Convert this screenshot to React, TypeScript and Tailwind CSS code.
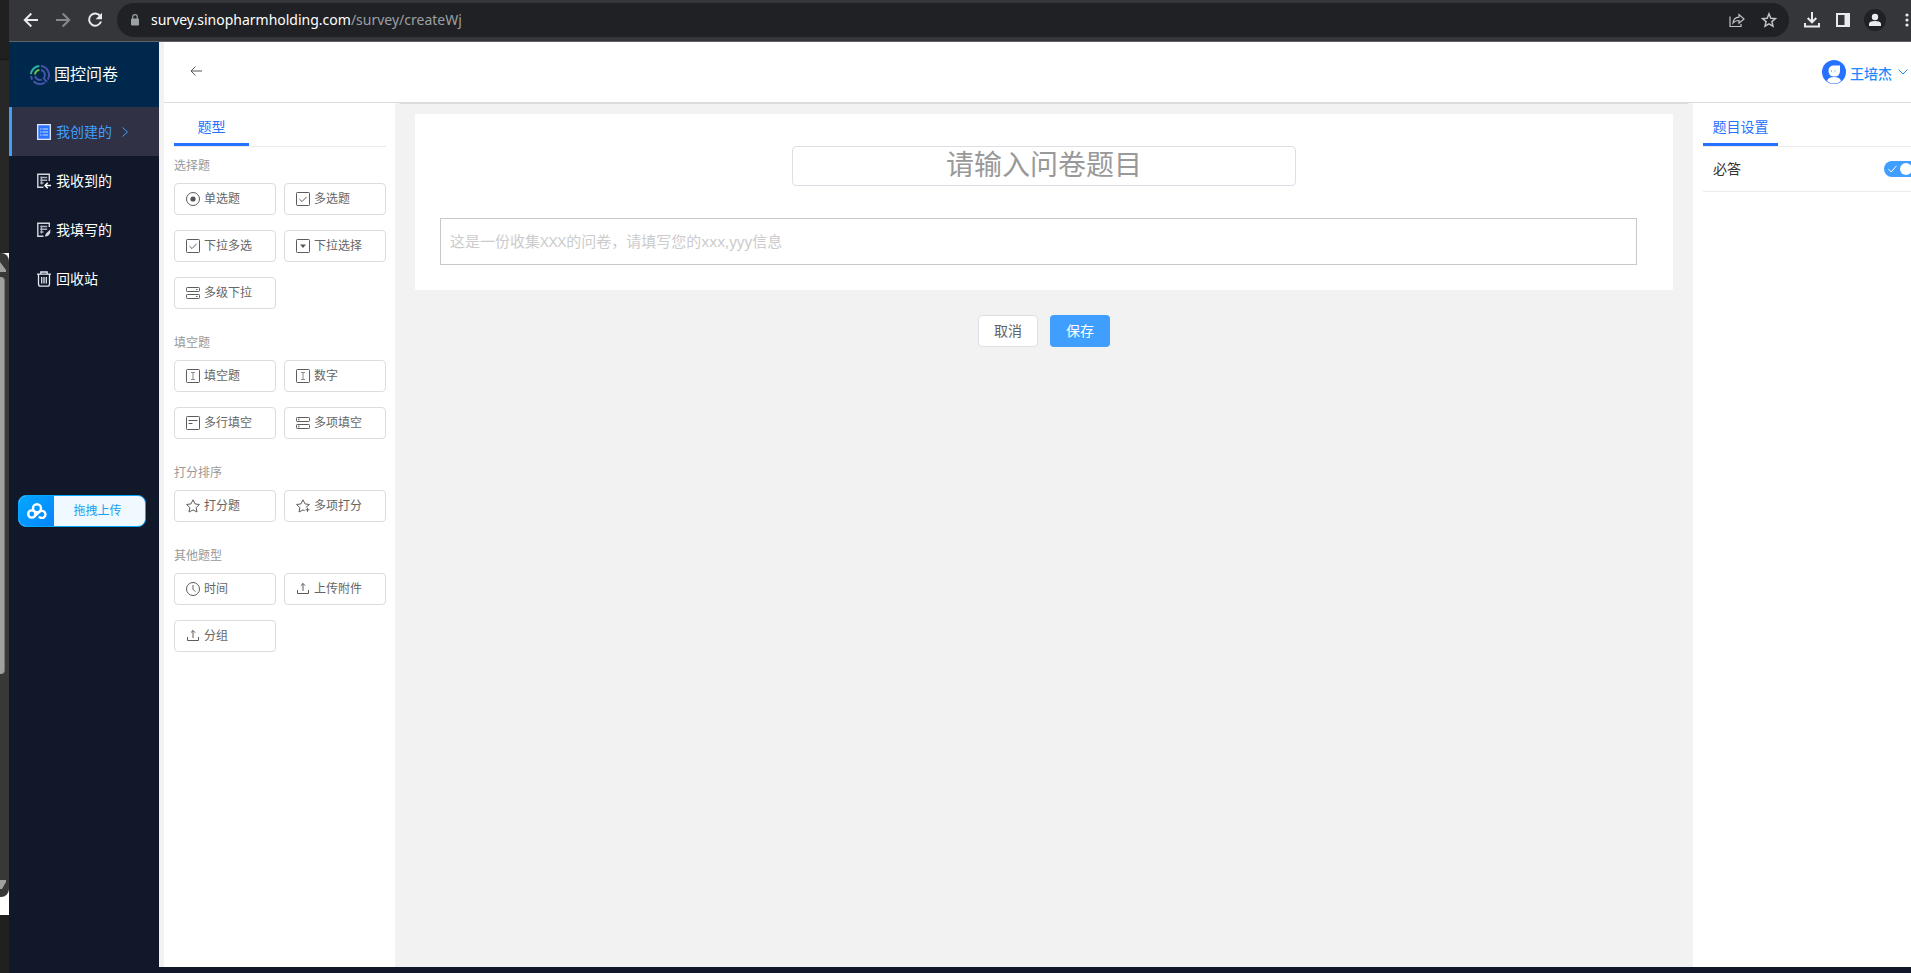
import React, { useState } from 'react';

type IconProps = { name: string };

// 14x14 line icons for the question types
function TypeIcon({ name }: IconProps) {
  const box = <rect x="0.5" y="0.5" width="13" height="13" rx="0.8" />;
  return (
    <svg viewBox="0 0 14 14" className="w-3.5 h-3.5 shrink-0" fill="none" stroke="#5c5c5c" strokeWidth="1" aria-hidden="true">
      {name === 'radio' && (
        <>
          <circle cx="7" cy="7" r="6.5" />
          <circle cx="7" cy="7" r="2.6" fill="#555" stroke="none" />
        </>
      )}
      {name === 'check' && <>{box}<path d="M3.5 7.2 6 9.6l4.6-4.8" /></>}
      {name === 'select' && <>{box}<path d="M4 5.5h6L7 9z" fill="#555" stroke="none" /></>}
      {name === 'cascade' && (
        <>
          <rect x="0.5" y="1.5" width="13" height="4" rx="0.8" />
          <rect x="0.5" y="8.5" width="13" height="4" rx="0.8" />
          <path d="M10 3.5h1.5M10 10.5h1.5" />
        </>
      )}
      {name === 'multi' && (
        <>
          <rect x="0.5" y="1.5" width="13" height="4" rx="0.8" />
          <rect x="0.5" y="8.5" width="13" height="4" rx="0.8" />
          <path d="M2.8 2.5v2M2.8 9.5v2" />
        </>
      )}
      {name === 'input' && <>{box}<path d="M5 3.5h4M5 10.5h4M7 3.5v7" stroke="#888" /></>}
      {name === 'textarea' && <>{box}<path d="M2.5 4.5h9M2.5 7.5h4" /></>}
      {name === 'star' && <path d="M7 .8 9 4.9l4.4.6-3.2 3.1.8 4.4L7 10.900 3 13l.8-4.400L.6 5.500 5 4.900z" />}
      {name === 'stars' && (
        <>
          <path d="M9.800 8.400 13.400 5.500 9 4.900 7 .8 5 4.900.6 5.500l3.200 3.100L3 13l4-2.100 1.600.8" />
          <path d="M11.500 8.800v4M9.500 10.800h4" />
        </>
      )}
      {name === 'time' && <><circle cx="7" cy="7" r="6.5" /><path d="M7 3v4.3l2.3 2.3" /></>}
      {name === 'upload' && <path d="M1.500 8v3.500h11V8M7 9V1.500M4.800 3.700 7 1.500l2.200 2.200" />}
    </svg>
  );
}

function MenuIcon({ name }: IconProps) {
  if (name === 'created') {
    return (
      <svg viewBox="0 0 14 16" className="w-3.5 h-4" aria-hidden="true">
        <rect width="14" height="16" fill="#dfe6f7" />
        <rect x="1.3" y="1.3" width="11.4" height="13.4" fill="#2b74ff" />
        <path d="M3 5h1.5M3 8h1.5M3 11h1.5M5.5 5H11M5.5 8H11M5.5 11H11" stroke="#c9dcff" strokeWidth="1.2" />
      </svg>
    );
  }
  if (name === 'trash') {
    return (
      <svg viewBox="0 0 14 16" className="w-3.5 h-4" fill="none" stroke="#e3e6ee" strokeWidth="1.3" aria-hidden="true">
        <path d="M0 3.2h14M3.8 3V1h6.4v2M1.5 3.5V13q0 2.2 2.2 2.2h6.6q2.2 0 2.2-2.2V3.5M4.7 6v6.5M7 6v6.5M9.3 6v6.5" />
      </svg>
    );
  }
  return (
    <svg viewBox="0 0 14 16" className="w-3.5 h-4" fill="none" stroke="#d3d7e0" strokeWidth="1.4" aria-hidden="true">
      <path d="M3.2 4.5h7M3.2 7.200h7M3.2 10h3.300M4.500 3.500V11.500" stroke="#aab0bd" />
      {name === 'received' ? (
        <>
          <path d="M12.300 8V1.200H.8v13h5.700" />
          <path d="M14 12.500H8M10.700 9.800 8 12.500l2.700 2.700" stroke="#fff" />
        </>
      ) : (
        <>
          <path d="M12.300 5V1.200H.8v13h5.700" />
          <path d="M8 14.500q.2-2.500 1.500-3.500l4-3.700q.3 4-1.800 5.900Q10.300 14.500 8 14.500z" fill="#d3d7e0" stroke="none" />
        </>
      )}
    </svg>
  );
}

function Logo() {
  return (
    <svg viewBox="0 0 20 20" className="w-5 h-5" fill="none" strokeWidth="2" aria-hidden="true">
      <path d="M1 9.200A9 9 0 0 1 9.300 1" stroke="#2bb3a3" />
      <path d="M11 1.100A9 9 0 0 1 17.800 14.500M14.800 17.600A9 9 0 0 1 3.500 16.200M1 11a9 9 0 0 0 1.300 3.600" stroke="#4553a8" />
      <path d="M5 9.500A5 5 0 0 1 9.400 5" stroke="#6cc04a" />
      <path d="M11 5.100a5 5 0 0 1 2.700 8.200l3.300 3.700M11.800 14.600A5 5 0 0 1 5.100 11" stroke="#4553a8" />
    </svg>
  );
}

const menus = [
  { icon: 'created', text: '我创建的' },
  { icon: 'received', text: '我收到的' },
  { icon: 'filled', text: '我填写的' },
  { icon: 'trash', text: '回收站' },
];

const groups = [
  {
    title: '选择题',
    items: [
      { icon: 'radio', text: '单选题' },
      { icon: 'check', text: '多选题' },
      { icon: 'check', text: '下拉多选' },
      { icon: 'select', text: '下拉选择' },
      { icon: 'cascade', text: '多级下拉' },
    ],
  },
  {
    title: '填空题',
    items: [
      { icon: 'input', text: '填空题' },
      { icon: 'input', text: '数字' },
      { icon: 'textarea', text: '多行填空' },
      { icon: 'multi', text: '多项填空' },
    ],
  },
  {
    title: '打分排序',
    items: [
      { icon: 'star', text: '打分题' },
      { icon: 'stars', text: '多项打分' },
    ],
  },
  {
    title: '其他题型',
    items: [
      { icon: 'time', text: '时间' },
      { icon: 'upload', text: '上传附件' },
      { icon: 'upload', text: '分组' },
    ],
  },
];

function BackgroundWindow() {
  return (
    <div className="w-[9px] shrink-0 flex flex-col bg-[#202020] overflow-hidden">
      <div className="h-[60px] border-b border-[#181818]" />
      <div className="h-[193px] bg-[#272727]" />
      <div className="flex-1 flex flex-col bg-white">
        <div className="flex-1 flex flex-col bg-[#383838] rounded-r-lg">
          <svg viewBox="0 0 9 24" className="w-[9px] h-6" aria-hidden="true"><path d="M0 9l6 8v2H0z" fill="#a0a0a0" /></svg>
          <div className="w-[5px] h-[397px] bg-[#a0a0a0] border-r border-[#777] rounded-r" />
          <div className="flex-1" />
          <svg viewBox="0 0 9 17" className="w-[9px] h-[17px]" aria-hidden="true"><path d="M0 0h6v2L2 9H0z" fill="#a0a0a0" /></svg>
        </div>
        <div className="h-[18px]" />
      </div>
      <div className="h-[58px]" />
    </div>
  );
}

function BrowserBar() {
  return (
    <div className="h-[42px] bg-[#35363a] border-b border-[#5f6368] flex items-center pt-px pb-0.5 overflow-hidden">
      <div className="flex items-center gap-3 pl-3 text-[#e8eaed]">
        <button aria-label="后退" className="w-5 h-5">
          <svg viewBox="0 0 20 20" fill="none" stroke="currentColor" strokeWidth="2"><path d="M17 10H4M10.3 3.5 3.8 10l6.5 6.5" /></svg>
        </button>
        <button aria-label="前进" className="w-5 h-5 text-[#86888c]">
          <svg viewBox="0 0 20 20" fill="none" stroke="currentColor" strokeWidth="2"><path d="M3 10h13M9.7 3.5l6.5 6.5-6.5 6.5" /></svg>
        </button>
        <button aria-label="刷新" className="w-5 h-5">
          <svg viewBox="0 0 20 20" fill="none" stroke="currentColor" strokeWidth="2"><path d="M15.3 6.3A6.1 6.1 0 1 0 16 11.5" /><path d="M17 2.8v6.4h-6.4z" fill="currentColor" stroke="none" /></svg>
        </button>
      </div>
      <div className="flex-1 h-[34px] ml-3 rounded-full bg-[#202124] flex items-center pl-3.5 pr-3">
        <svg viewBox="0 0 8 12" className="w-2 h-3 mr-3" aria-hidden="true">
          <rect y="4.5" width="8" height="7" rx="1" fill="#9aa0a6" />
          <path d="M1.7 5V3a2.300 2.300 0 0 1 4.600 0v2" fill="none" stroke="#9aa0a6" strokeWidth="1.2" />
        </svg>
        <div className="flex-1 text-sm text-[#9aa0a6] font-['Noto_Sans','Open_Sans',sans-serif]">
          <span className="text-white">survey.sinopharmholding.com</span>/survey/createWj
        </div>
        <div className="flex gap-4 text-[#c0c3c7]">
          <button aria-label="分享" className="w-4 h-4">
            <svg viewBox="0 0 16 16" fill="none" stroke="currentColor" strokeWidth="1.2"><path d="M1 4.5v10h11V12M4 11q.5-5.500 6-5.800V2.500L15 7l-5 4.300V8.500Q6 8.500 4 11z" /></svg>
          </button>
          <button aria-label="收藏" className="w-4 h-4">
            <svg viewBox="0 0 16 16" fill="none" stroke="currentColor" strokeWidth="1.5"><path d="m8 1.800 1.800 4.400 4.700.4-3.600 3 1.100 4.600-4-2.400-4 2.400 1.100-4.600-3.600-3 4.700-.4z" /></svg>
          </button>
        </div>
      </div>
      <div className="flex items-center gap-[11px] ml-[13px] text-[#e8eaed]">
        <button aria-label="下载" className="w-5 h-5">
          <svg viewBox="0 0 20 20" fill="none" stroke="currentColor" strokeWidth="2"><path d="M3 13v3.500h14V13M10 2v10M5.700 8l4.300 4.300L14.300 8" /></svg>
        </button>
        <button aria-label="侧边栏" className="w-5 h-5">
          <svg viewBox="0 0 20 20"><path d="M3 3h14v14H3z" fill="currentColor" /><path d="M5 5h6.500v10H5z" fill="#35363a" /></svg>
        </button>
        <button aria-label="用户" className="w-[22px] h-[22px] rounded-full bg-[#202124]">
          <svg viewBox="0 0 22 22"><circle cx="11" cy="8" r="3.2" fill="currentColor" /><path d="M5 17v-2q0-3 6-3t6 3v2z" fill="currentColor" /></svg>
        </button>
        <button aria-label="菜单" className="w-5 h-5 -mr-1.5">
          <svg viewBox="0 0 20 20" fill="currentColor"><circle cx="10" cy="5" r="1.6" /><circle cx="10" cy="10" r="1.6" /><circle cx="10" cy="15" r="1.6" /></svg>
        </button>
      </div>
    </div>
  );
}

function Sidebar() {
  const [active, setActive] = useState(0);
  return (
    <aside className="relative w-[150px] shrink-0 bg-[#101829]">
      <div className="h-[65px] bg-[#00284d] flex items-center gap-1 pl-[21px] text-white text-base">
        <Logo />
        <span>国控问卷</span>
      </div>
      <nav>
        {menus.map((m, i) => (
          <a
            key={m.text}
            href="#"
            onClick={() => setActive(i)}
            className={
              i === active
                ? 'flex items-center h-[49px] pl-[25px] border-l-3 border-[#409eff] bg-[#303144] text-[#409eff] text-sm'
                : 'flex items-center h-[49px] pl-7 text-white text-sm'
            }
          >
            <MenuIcon name={m.icon} />
            <span className="ml-[5px]">{m.text}</span>
            {i === active && (
              <svg viewBox="0 0 6 10" className="w-1.5 h-2.5 ml-2.5" fill="none" stroke="currentColor" aria-hidden="true"><path d="m.5.5 5 4.5-5 4.5" /></svg>
            )}
          </a>
        ))}
      </nav>
      <button className="absolute left-[9px] top-[453px] w-32 h-8 rounded-lg overflow-hidden flex border border-[#06a7ff] bg-[#eff9ff] text-xs text-[#149ff0]">
        <span className="w-[35px] h-full flex items-center justify-center bg-linear-to-br from-[#06a7ff] to-[#0a84ff]">
          <svg viewBox="0 0 20 16" className="w-5 h-4" fill="none" stroke="#fff" strokeWidth="2.4" aria-hidden="true">
            <circle cx="10" cy="5.2" r="4" />
            <circle cx="4.8" cy="11" r="3.6" />
            <path d="M12 13.600a3.600 3.600 0 1 0 .6-5L7.500 13.500" />
          </svg>
        </span>
        <span className="flex-1 h-full flex items-center justify-center pr-1">拖拽上传</span>
      </button>
    </aside>
  );
}

function PanelTab({ text }: { text: string }) {
  return (
    <div className="flex border-b border-[#ebebeb]">
      <button className="w-[75px] h-[43px] pt-2 border-b-3 border-[#2672ff] text-sm text-[#2672ff]">{text}</button>
    </div>
  );
}

function TypePanel() {
  return (
    <section className="w-[231px] shrink-0 bg-white pl-2.5 pr-[9px]">
      <PanelTab text="题型" />
      {groups.map((g, i) => (
        <div key={g.title} className={i === 0 ? 'pt-2.5' : 'pt-[25px]'}>
          <h3 className="text-xs leading-[18px] text-[#999]">{g.title}</h3>
          <div className="grid grid-cols-2 gap-x-2 gap-y-[15px] mt-2">
            {g.items.map((it) => (
              <button key={it.text} className="h-8 flex items-center gap-1 pl-[11px] border border-[#dcdcdc] rounded text-xs text-[#666]">
                <TypeIcon name={it.icon} />
                {it.text}
              </button>
            ))}
          </div>
        </div>
      ))}
    </section>
  );
}

function Editor() {
  return (
    <section className="flex-1 min-w-0 bg-[#f2f2f2] px-[5px]">
      <div className="border-t border-[#dcdcdc] px-[15px] pt-2.5">
        <div className="bg-white pt-8 pb-[25px] pl-[25px] pr-9">
          <div className="flex justify-center ml-[11px]">
            <input
              aria-label="问卷题目"
              placeholder="请输入问卷题目"
              className="w-[42.5%] h-10 border border-[#dcdfe6] rounded text-center text-[28px] placeholder:text-[#999] outline-none"
            />
          </div>
          <input
            aria-label="问卷说明"
            placeholder="这是一份收集XXX的问卷，请填写您的xxx,yyy信息"
            className="block w-full h-[47px] mt-8 px-[9px] pb-0.5 border border-[#c8c8c8] text-[15px] placeholder:text-[#ccc] outline-none font-['Noto_Sans','Noto_Sans_CJK_SC',sans-serif]"
          />
        </div>
        <div className="flex justify-center gap-3 mt-[25px] text-sm">
          <button className="w-[60px] h-8 bg-white border border-[#dcdfe6] rounded text-[#606266]">取消</button>
          <button className="w-[60px] h-8 bg-[#409eff] rounded text-white">保存</button>
        </div>
      </div>
    </section>
  );
}

function SettingPanel() {
  const [required, setRequired] = useState(true);
  return (
    <section className="w-[218px] shrink-0 bg-white pl-2.5 overflow-hidden">
      <div className="w-[221px]">
        <PanelTab text="题目设置" />
        <label className="flex items-center justify-between h-[45px] pl-2.5 border-b border-[#ebebeb] text-sm text-[#333]">
          必答
          <input type="checkbox" role="switch" className="sr-only" checked={required} onChange={(e) => setRequired(e.target.checked)} />
          <span className={required ? 'w-10 h-4 rounded-full bg-[#409eff] flex items-center pl-1' : 'w-10 h-4 rounded-full bg-[#dcdfe6] flex items-center pl-1'}>
            <svg viewBox="0 0 9 8" className="w-[9px] h-2" fill="none" stroke="#fff" aria-hidden="true"><path d="m.5 4 2.700 3L8.500.8" /></svg>
            <span className="w-3 h-3 ml-[3px] rounded-full bg-white" />
          </span>
        </label>
      </div>
    </section>
  );
}

export default function App() {
  return (
    <div className="h-screen flex overflow-hidden bg-[#101829] font-['Liberation_Sans','Noto_Sans_CJK_SC',sans-serif]">
      <BackgroundWindow />
      <div className="flex-1 min-w-0 flex flex-col">
        <BrowserBar />
        <div className="flex-1 min-h-0 flex">
          <Sidebar />
          <main className="flex-1 min-w-0 flex flex-col mb-1.5 pl-[5px] bg-[#f2f2f2]">
            <header className="h-[61px] shrink-0 bg-white border-b border-[#dcdcdc] flex items-center justify-between pl-[26px] pr-[3px]">
              <button aria-label="返回" className="w-3 h-3 mb-0.5">
                <svg viewBox="0 0 12 12" fill="none" stroke="#555"><path d="M12 6H1.200M5.500 1.500 1 6l4.500 4.500" /></svg>
              </button>
              <button className="flex items-center gap-1 text-sm font-medium text-[#1e88ff]">
                <svg viewBox="0 0 24 24" className="w-6 h-6" aria-hidden="true">
                  <circle cx="12" cy="12" r="12" fill="#2672ff" />
                  <path d="M6.500 11q0-5.500 5.500-5.500h6V11q0 5.500-5.700 5.500T6.500 11z" fill="#fff" />
                  <path d="M5 21q1-4 7-4t7 4q-3 2.500-7 2.500T5 21z" fill="#fff" />
                  <path d="M9.500 10v2M13 10v2" stroke="#9bbcff" />
                </svg>
                <span className="pt-1">王培杰</span>
                <svg viewBox="0 0 10 6" className="w-2.5 h-1.5 ml-0.5" fill="none" stroke="currentColor" aria-hidden="true"><path d="m.5.5 4.500 4.500L9.500.5" /></svg>
              </button>
            </header>
            <div className="flex-1 min-h-0 flex">
              <TypePanel />
              <Editor />
              <SettingPanel />
            </div>
          </main>
        </div>
      </div>
    </div>
  );
}
